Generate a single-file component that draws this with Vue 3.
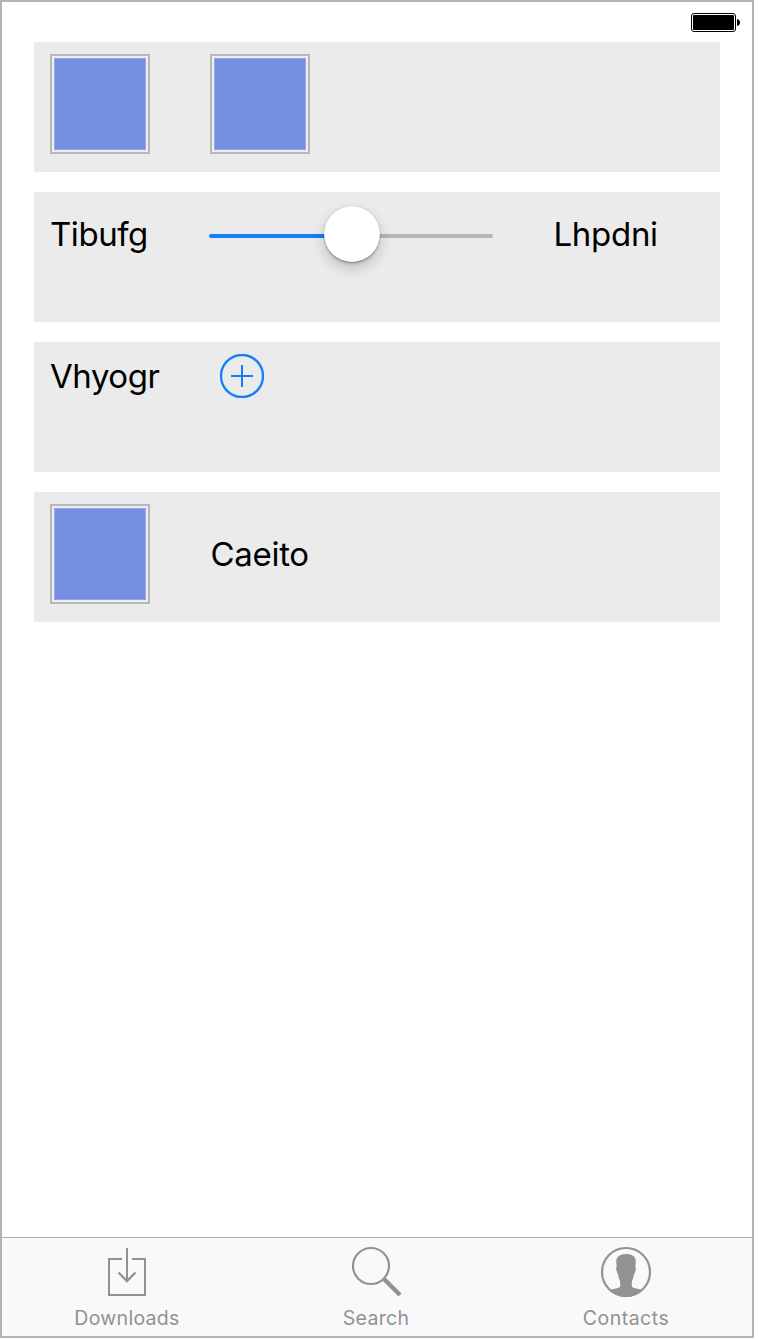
<script setup>
const tabs = ['Downloads', 'Search', 'Contacts']
</script>

<template>
  <div class="phone">
    <header class="status">
      <svg class="battery" width="50" height="20" viewBox="0 0 50 20">
        <rect x="0.5" y="0.5" width="44" height="18" rx="2.5" fill="#fff" stroke="#000" />
        <rect x="2" y="2" width="41" height="15" rx="1" fill="#000" />
        <path d="M46 6 Q49 6.5 49 9.5 Q49 12.5 46 13 Z" fill="#000" />
      </svg>
    </header>
    <main class="content">
      <section class="row">
        <div class="swatch"></div>
        <div class="swatch second"></div>
      </section>
      <section class="row">
        <span class="label l1">Tibufg</span>
        <div class="slider"><div class="thumb"></div></div>
        <span class="label l2">Lhpdni</span>
      </section>
      <section class="row">
        <span class="label l3">Vhyogr</span>
        <svg class="add" width="44" height="44" viewBox="0 0 44 44" fill="none" stroke="#147efb" stroke-width="2">
          <circle cx="22" cy="22" r="21" stroke-width="2.3" />
          <path d="M11 22H33M22 11V33" />
        </svg>
      </section>
      <section class="row">
        <div class="swatch"></div>
        <span class="label l4">Caeito</span>
      </section>
    </main>
    <nav class="tabs">
      <div v-for="tab in tabs" :key="tab" class="tab" :class="tab.toLowerCase()">
        <svg v-if="tab === 'Downloads'" class="icon" width="52" height="52" viewBox="0 0 52 52" fill="none" stroke="#929292" stroke-width="2">
          <path d="M21 13H8V49H44V13H31M26 2V35" />
          <path d="M17.5 26.5L26 35L34.5 26.5" stroke-width="2.4" />
        </svg>
        <svg v-else-if="tab === 'Search'" class="icon" width="52" height="52" viewBox="0 0 52 52" fill="none" stroke="#929292">
          <circle cx="21" cy="20" r="18" stroke-width="2.2" />
          <path d="M33.5 32.5L50 49" stroke-width="4.4" />
        </svg>
        <svg v-else class="icon" width="52" height="52" viewBox="0 0 52 52">
          <circle cx="26" cy="26" r="24" fill="none" stroke="#929292" stroke-width="2.2" />
          <path fill="#929292" d="M26 8C20 8 16 11 16.2 16L16.7 21C15.7 21 16 24 17 26C17.5 28 18.2 28.5 18.4 30C18.7 33 20.2 34.5 20.2 36V40C20.2 43 13 42 9.5 44.5Q16.5 51 26 51Q35.5 51 42.5 44.5C39 42 31.8 43 31.8 40V36C31.8 34.5 33.3 33 33.6 30C33.8 28.5 34.5 28 35 26C36 24 36.3 21 35.3 21L35.8 16C36 10 32 8 26 8Z" />
        </svg>
        <span class="caption">{{ tab }}</span>
      </div>
    </nav>
  </div>
</template>

<style>
body {
  background: #fff;
}
</style>

<style scoped>
.phone {
  box-sizing: border-box;
  display: flex;
  flex-direction: column;
  width: 754px;
  height: 1338px;
  border: 2px solid #b3b3b3;
  background: #fff;
  font-family: Inter, "Liberation Sans", sans-serif;
}
.status {
  display: flex;
  justify-content: flex-end;
  box-sizing: border-box;
  height: 40px;
  padding: 11px 11px 0 0;
}
.battery {
  display: block;
}
.content {
  flex: 1;
  display: flex;
  flex-direction: column;
  gap: 20px;
  padding: 0 32px;
}
.row {
  box-sizing: border-box;
  display: flex;
  align-items: flex-start;
  height: 130px;
  padding: 12px 16px;
  background: #ebebeb;
}
.swatch {
  box-sizing: border-box;
  flex: none;
  width: 100px;
  height: 100px;
  border: 2px solid #b8b8b8;
  padding: 2px;
  background: #768fe2 content-box;
  box-shadow: inset 0 0 0 1px #ececef, inset 0 0 0 2px #eef0fa, inset 0 0 0 3px #92a6e9;
}
.second {
  margin-left: 60px;
}
.label {
  flex: none;
  color: #000;
  font-size: 33px;
  line-height: 40px;
  letter-spacing: -0.45px;
  white-space: nowrap;
}
.l1 {
  width: 159px;
  margin-top: 10px;
}
.l2 {
  margin: 10px 0 0 60.5px;
  letter-spacing: -0.3px;
}
.l3 {
  width: 170px;
  margin-top: 2px;
}
.l4 {
  margin: 30px 0 0 60.5px;
  letter-spacing: -0.3px;
}
.slider {
  flex: none;
  display: flex;
  justify-content: center;
  align-items: center;
  width: 284px;
  height: 4px;
  margin-top: 30px;
  border-radius: 2px;
  background: linear-gradient(to right, #147efb 50%, #b6b6b6 50%);
}
.thumb {
  flex: none;
  width: 56px;
  height: 56px;
  margin: -4px 2px 0 3px;
  border-radius: 50%;
  background: #fff;
  box-shadow: 0 0 1px rgba(0, 0, 0, 0.3), 0 2px 2px rgba(0, 0, 0, 0.22), 0 6px 14px rgba(0, 0, 0, 0.2);
}
.add {
  display: block;
}
.tabs {
  display: grid;
  grid-template-columns: 250px 248px 252px;
  box-sizing: border-box;
  height: 99px;
  border-top: 1px solid #acacac;
  background: #f9f9f9;
}
.tab {
  display: flex;
  flex-direction: column;
  align-items: center;
  padding-top: 8px;
}
.icon {
  display: block;
}
.caption {
  margin-top: 8px;
  color: #929292;
  font-size: 19.5px;
  line-height: 24px;
  letter-spacing: 0.3px;
}
.contacts .caption {
  letter-spacing: 0.5px;
}
</style>
